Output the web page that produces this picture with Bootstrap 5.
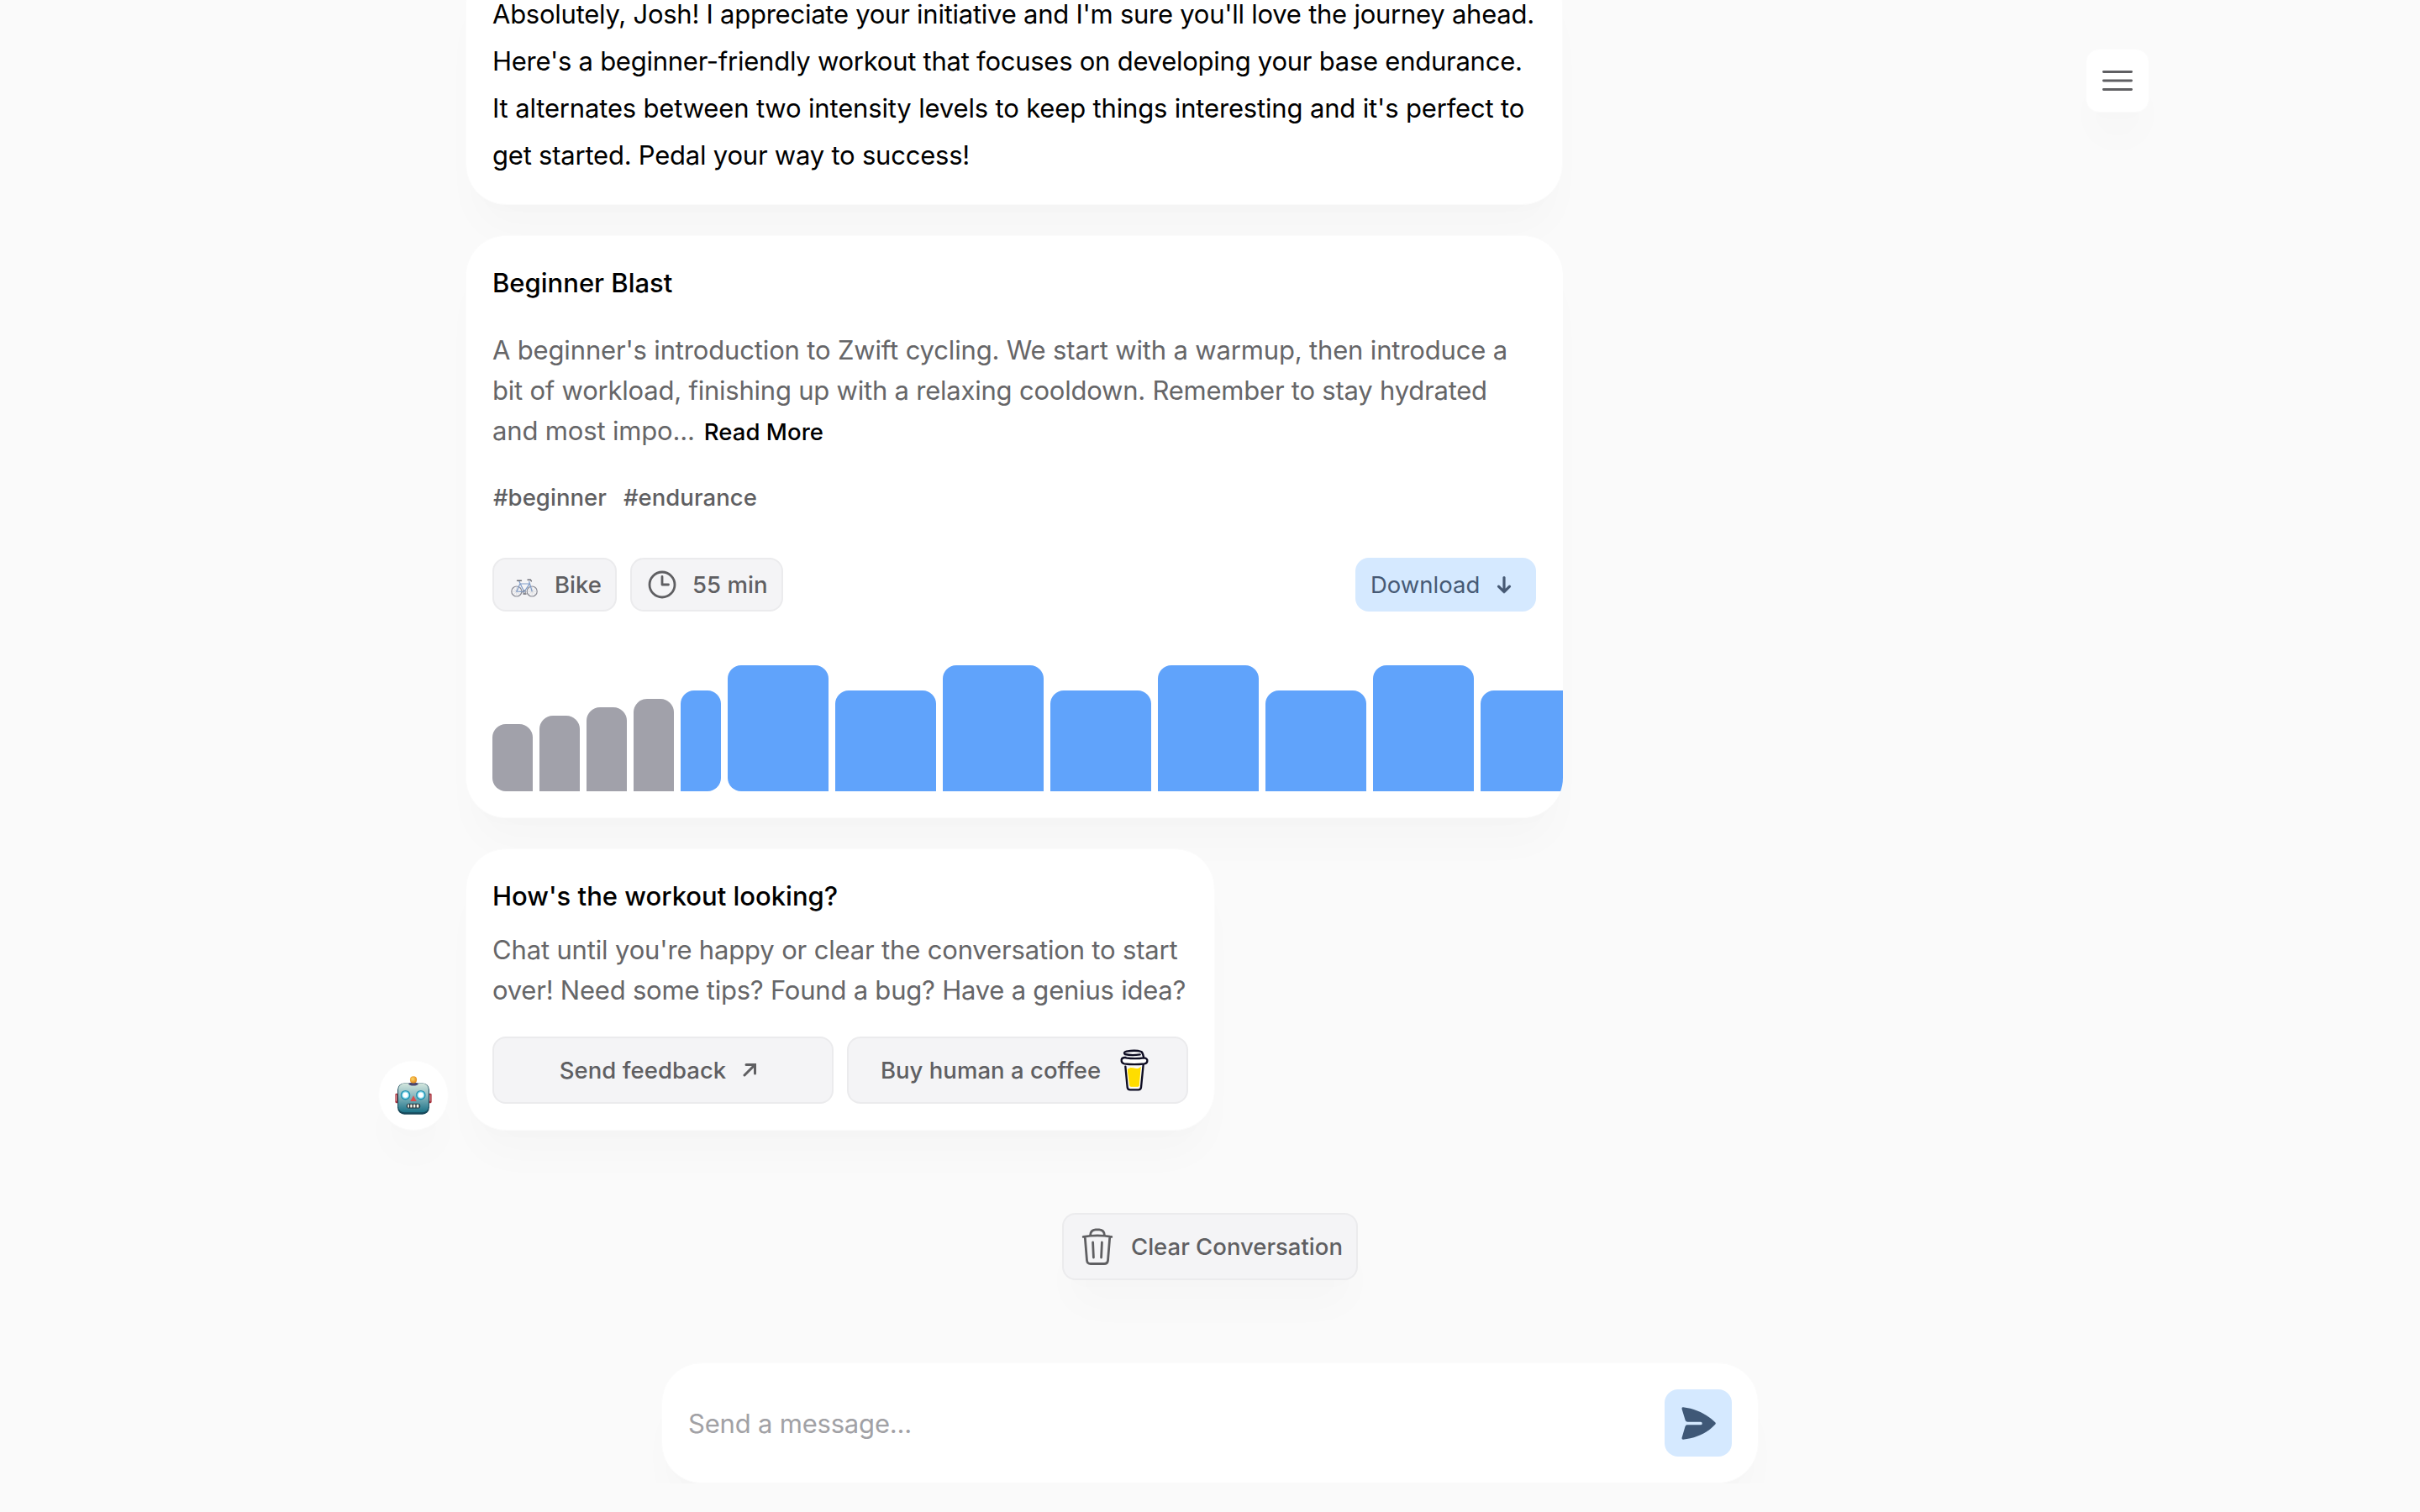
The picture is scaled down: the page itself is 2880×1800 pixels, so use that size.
<!DOCTYPE html>
<html lang="en">
<head>
    <meta charset="UTF-8">
    <meta name="viewport" content="width=device-width, initial-scale=1.0">
    <link href="https://cdn.jsdelivr.net/npm/bootstrap@5.3.3/dist/css/bootstrap.min.css" rel="stylesheet">
    <script src="https://cdn.jsdelivr.net/npm/bootstrap@5.3.3/dist/js/bootstrap.bundle.min.js"></script>

    <title>Workout Chat</title>

    <style>
        body {
            background: #fafafa;
            color: #000;
            font-family: Inter, "Liberation Sans", sans-serif;
            font-size: 31px;
            line-height: 48px;
        }

        .chat-area { height: 1346px; padding-left: 450px; padding-right: 322px; }
        .chat-row { gap: 20px; }
        .bubbles { gap: 36px; }

        .bubble, .avatar, .menu-btn, .clear-btn, .composer {
            box-shadow: 0 40px 50px -10px rgba(0, 0, 0, .02), 0 16px 20px -12px rgba(0, 0, 0, .012);
        }
        .bubble, .avatar, .menu-btn, .composer { background: #fff; border: 1px solid #fbfbfb; }
        .bubble { border-radius: 48px; padding: 32px 31px 31px; width: 1306px; }
        .bubble-reply { padding-bottom: 30px; }
        .bubble-wide { border-right: 0; padding-right: 32px; }
        .bubble-narrow { width: 892px; }
        .bubble p { margin: 0; color: #666668; white-space: nowrap; }
        .bubble p.reply { color: #000; line-height: 56px; }
        .bubble p.summary { margin-top: 32px; }
        .bubble h2 { font-size: 31px; line-height: 48px; font-weight: 500; margin: 0; color: #000; }

        .t1 { letter-spacing: -.16px; }
        .t2 { letter-spacing: -.22px; }
        .t3 { letter-spacing: -.25px; }

        .label-text { font-size: 27.5px; font-weight: 500; letter-spacing: .04px; line-height: 40px; color: #5f5f62; }
        .read-more { color: #000; margin-left: 11px; }
        .tags { gap: 20px; margin-top: 35px; padding-left: 1px; }
        .actions { margin-top: 52px; }

        .pill, .wide-btn, .clear-btn {
            background: #f4f4f6;
            border: 2px solid #ebebed;
            border-radius: 16px;
            white-space: nowrap;
        }
        .pill { height: 64px; padding-left: 20px; gap: 18px; }
        .pill-sport { width: 148px; gap: 20px; }
        .pill-time { width: 182px; padding-left: 19px; gap: 19px; }
        .blue-btn { background: #d5e9ff; color: #475a75; border: 0; border-radius: 16px; }
        .download { height: 64px; width: 215px; padding-left: 18px; gap: 13px; }
        .wide-btn { height: 80px; gap: 12px; }
        .wide-btns { margin-top: 31px; }

        .bars { gap: 8px; height: 150px; margin-top: 64px; width: 1306px; }
        .bar { flex: none; width: 120px; background: #60a3fb; border-radius: 16px 16px 0 0; }
        .bar-short { width: 48px; }
        .bar-gray { background: #a1a1aa; }
        .round-left { border-bottom-left-radius: 16px; }
        .round-right { border-bottom-right-radius: 16px; }

        .avatar { width: 84px; height: 84px; border-radius: 50%; }
        .menu-btn { width: 76px; height: 76px; margin-top: 58px; border-radius: 16px; }

        .bottom-area { padding-top: 98px; gap: 98px; }
        .clear-btn { height: 80px; width: 352px; padding-left: 21px; gap: 21px; letter-spacing: 0; }
        .composer { width: 1306px; height: 144px; padding: 31px; border-radius: 48px; }
        .composer input, .composer input:focus { border: 0; padding: 2px 0 0; background: none; font-size: 31px; letter-spacing: -.2px; }
        .composer input::placeholder { color: #a1a1a5; opacity: 1; }
        .send-btn { width: 80px; height: 80px; }
        svg { flex: none; display: block; }
    </style>
</head>
<body class="overflow-hidden">

    <main class="chat-area d-flex justify-content-between align-items-start">
        <div class="chat-row d-flex align-items-end h-100">
            <div class="avatar d-flex align-items-center justify-content-center">
                <!-- robot -->
                <svg width="44" height="46" viewBox="0 0 130 136">
                    <defs>
                        <linearGradient id="face" x1="0" y1="0" x2="0" y2="1">
                            <stop offset="0" stop-color="#d3e6dd"/>
                            <stop offset=".4" stop-color="#8fbcc2"/>
                            <stop offset="1" stop-color="#1b7287"/>
                        </linearGradient>
                        <radialGradient id="ball" cx=".4" cy=".4" r=".6">
                            <stop offset="0" stop-color="#ffd766"/>
                            <stop offset="1" stop-color="#e08a1c"/>
                        </radialGradient>
                    </defs>
                    <rect x="1" y="61" width="12" height="34" rx="4" fill="#a8343f"/>
                    <rect x="117" y="61" width="12" height="34" rx="4" fill="#a8343f"/>
                    <rect x="3" y="66" width="3" height="22" fill="#e5a0a0"/>
                    <rect x="122" y="66" width="3" height="22" fill="#e5a0a0"/>
                    <rect x="9" y="25" width="112" height="110" rx="24" fill="#17485a"/>
                    <rect x="12" y="26" width="106" height="102" rx="21" fill="url(#face)"/>
                    <path d="M47 27q18-11 36 0q-5 7-18 7t-18-7z" fill="#4a4670"/>
                    <circle cx="65" cy="13" r="12" fill="url(#ball)"/>
                    <circle cx="37" cy="67" r="17" fill="#2392b0"/>
                    <circle cx="91" cy="67" r="17" fill="#2392b0"/>
                    <circle cx="37" cy="67" r="13" fill="#8bdcf0"/>
                    <circle cx="91" cy="67" r="13" fill="#8bdcf0"/>
                    <circle cx="37" cy="67" r="9" fill="#fff"/>
                    <circle cx="91" cy="67" r="9" fill="#fff"/>
                    <path d="M65 69l11 20H54z" fill="#d9504f"/>
                    <rect x="41" y="97" width="48" height="17" rx="7" fill="#23343c"/>
                    <path d="M45 100h5v11h-5zM54 100h7v11h-7zM65 100h7v11h-7zM76 100h8v11h-8z" fill="#f7f5e8"/>
                </svg>
            </div>

            <div class="bubbles d-flex flex-column justify-content-end h-100">
                <div class="bubble bubble-reply flex-shrink-0">
                    <p class="reply">
                        <span class="t3">Absolutely, Josh! I appreciate your initiative and I'm sure you'll love the journey ahead.</span><br>
                        <span class="t3">Here's a beginner-friendly workout that focuses on developing your base endurance.</span><br>
                        <span class="t1">It alternates between two intensity levels to keep things interesting and it's perfect to</span><br>
                        <span class="t2">get started. Pedal your way to success!</span>
                    </p>
                </div>

                <div class="bubble bubble-wide flex-shrink-0 overflow-hidden">
                    <h2>Beginner Blast</h2>
                    <p class="summary">
                        <span class="t1">A beginner's introduction to Zwift cycling. We start with a warmup, then introduce a</span><br>
                        <span class="t2">bit of workload, finishing up with a relaxing cooldown. Remember to stay hydrated</span><br>
                        <span class="t1">and most impo...</span><span class="label-text read-more">Read More</span>
                    </p>
                    <div class="tags d-flex label-text">
                        <span>#beginner</span>
                        <span>#endurance</span>
                    </div>

                    <div class="actions d-flex align-items-center label-text">
                        <div class="pill pill-sport d-flex align-items-center me-3">
                            <svg width="32" height="30" viewBox="0 -8 32 30" fill="none">
                                <g stroke="#8b8c96" stroke-width="1.2">
                                    <circle cx="6.8" cy="15" r="6"/>
                                    <circle cx="25.2" cy="15" r="6"/>
                                </g>
                                <path d="M6.8 9v12M.8 15h12M2.6 10.8l8.4 8.4M11 10.8l-8.4 8.4M25.2 9v12M19.2 15h12M21 10.8l8.4 8.4M29.4 10.8l-8.4 8.4" stroke="#c3c4cb" stroke-width=".5"/>
                                <path d="M6.8 15l4-9h11.4l-6.4 9.6zM9.8 3l6 12.6M25.2 15l-3.6-12" stroke="#7f9cc8" stroke-width="1.2"/>
                                <path d="M7.5 2.2h5M20 1.2h3.4l1 1.6M15 18h3" stroke="#6b6c75" stroke-width="1.4" stroke-linecap="round"/>
                                <circle cx="15.8" cy="15.6" r="1.8" stroke="#85868f"/>
                            </svg>
                            <span>Bike</span>
                        </div>
                        <div class="pill pill-time d-flex align-items-center">
                            <svg width="34" height="34" viewBox="0 0 34 34" fill="none" stroke="#5f5f62" stroke-width="2.8" stroke-linecap="round" stroke-linejoin="round">
                                <circle cx="17" cy="17" r="15"/>
                                <path d="M17 7.5V17h7.5"/>
                            </svg>
                            <span>55 min</span>
                        </div>
                        <button class="download blue-btn d-flex align-items-center ms-auto">
                            <span>Download</span>
                            <svg width="32" height="32" viewBox="0 0 32 32" fill="none" stroke="#475a75" stroke-width="3.2" stroke-linecap="round" stroke-linejoin="round">
                                <path d="M16 7.5v17M9.5 18.2l6.5 6.5 6.5-6.5"/>
                            </svg>
                        </button>
                    </div>

                    <div class="bars d-flex align-items-end" id="bars"></div>
                </div>

                <div class="bubble bubble-narrow flex-shrink-0">
                    <h2>How's the workout looking?</h2>
                    <p class="mt-3">
                        <span class="t1">Chat until you're happy or clear the conversation to start</span><br>
                        <span class="t2">over! Need some tips? Found a bug? Have a genius idea?</span>
                    </p>
                    <div class="wide-btns row gx-3">
                        <div class="col-6">
                            <button class="wide-btn label-text w-100 d-flex align-items-center justify-content-center">
                                <span>Send feedback</span>
                                <svg width="36" height="34" viewBox="1 0 36 34" fill="none" stroke="#5f5f62" stroke-width="3" stroke-linecap="round">
                                    <path d="M11 23L23 11M13 10.5H23.5V21"/>
                                </svg>
                            </button>
                        </div>
                        <div class="col-6">
                            <button class="wide-btn label-text w-100 d-flex align-items-center justify-content-center">
                                <span>Buy human a coffee</span>
                                <svg width="52" height="50" viewBox="-34 -2 156 150" fill="none" stroke="#0d0c22" stroke-width="7" stroke-linecap="round" stroke-linejoin="round">
                                    <path d="M24 68q13-10 26-4t25-6l-6 70q-1 6-7 6H38q-6 0-7-6z" fill="#ffdd00" stroke="#fff" stroke-width="3"/>
                                    <path d="M18 60l7 74q1 9 10 9h29q9 0 10-9l8-81"/>
                                    <path d="M19 28Q5 27 4 36q-1 12 10 14 36 5 72 0 10-2 10-10 1-9-12-11-31 5-65 0z" fill="#fff"/>
                                    <path d="M70 17q-30 5-54-1Q10 9 22 6q32-6 53 1 5 4 8 19"/>
                                </svg>
                            </button>
                        </div>
                    </div>
                </div>
            </div>
        </div>

        <button class="menu-btn d-flex align-items-center justify-content-center p-0">
            <svg width="40" height="40" viewBox="0 0 40 40" stroke="#5f5f62" stroke-width="2.8" stroke-linecap="round">
                <path d="M3.4 9.5h33.2M3.4 20h33.2M3.4 30.5h33.2"/>
            </svg>
        </button>
    </main>

    <div class="bottom-area d-flex flex-column align-items-center">
        <button class="clear-btn label-text d-flex align-items-center">
            <svg width="38" height="44" viewBox="0 0 38 44" fill="none" stroke="#5f5f62" stroke-width="2.8" stroke-linecap="round" stroke-linejoin="round">
                <path d="M2.2 10.4q16.8-3 33.6 0M4.2 10.2l2.3 28.3q.4 4 4.4 4h16.2q4 0 4.4-4l2.3-28.3"/>
                <path d="M10.6 8.6q.2-6.4 6.2-6.7h4.4q6 .3 6.2 6.7M13.6 17l.8 18M24.4 17l-.8 18"/>
            </svg>
            <span>Clear Conversation</span>
        </button>

        <form class="composer d-flex align-items-center">
            <input type="text" class="form-control shadow-none" placeholder="Send a message...">
            <button type="button" class="send-btn blue-btn flex-shrink-0 d-flex align-items-center justify-content-center p-0">
                <svg width="41" height="39" viewBox="0 0 121 115" fill="#3f5877">
                    <path d="M6 1C52 6 92 28 118 53q5 4 0 9C92 90 52 110 6 114q-6-1-4-7L13 69q2-6 7-6h48q5 0 5-5.5t-5-5.5H22q-6 0-8-5L2 8Q0 1 6 1z"/>
                </svg>
            </button>
        </form>
    </div>

</body>

<script>
// workout intervals: height in px, short warmup steps first
const intervals = [
    { h: 80, cls: 'bar-short bar-gray round-left' },
    { h: 90, cls: 'bar-short bar-gray' },
    { h: 100, cls: 'bar-short bar-gray' },
    { h: 110, cls: 'bar-short bar-gray' },
    { h: 120, cls: 'bar-short round-right' },
    { h: 150, cls: 'round-left' },
    { h: 120, cls: '' },
    { h: 150, cls: '' },
    { h: 120, cls: '' },
    { h: 150, cls: '' },
    { h: 120, cls: '' },
    { h: 150, cls: '' },
    { h: 120, cls: '' }
];

document.getElementById('bars').innerHTML = intervals.map(step =>
    `<div class="bar ${step.cls}" style="height: ${step.h}px"></div>`
).join('');
</script>

</html>
